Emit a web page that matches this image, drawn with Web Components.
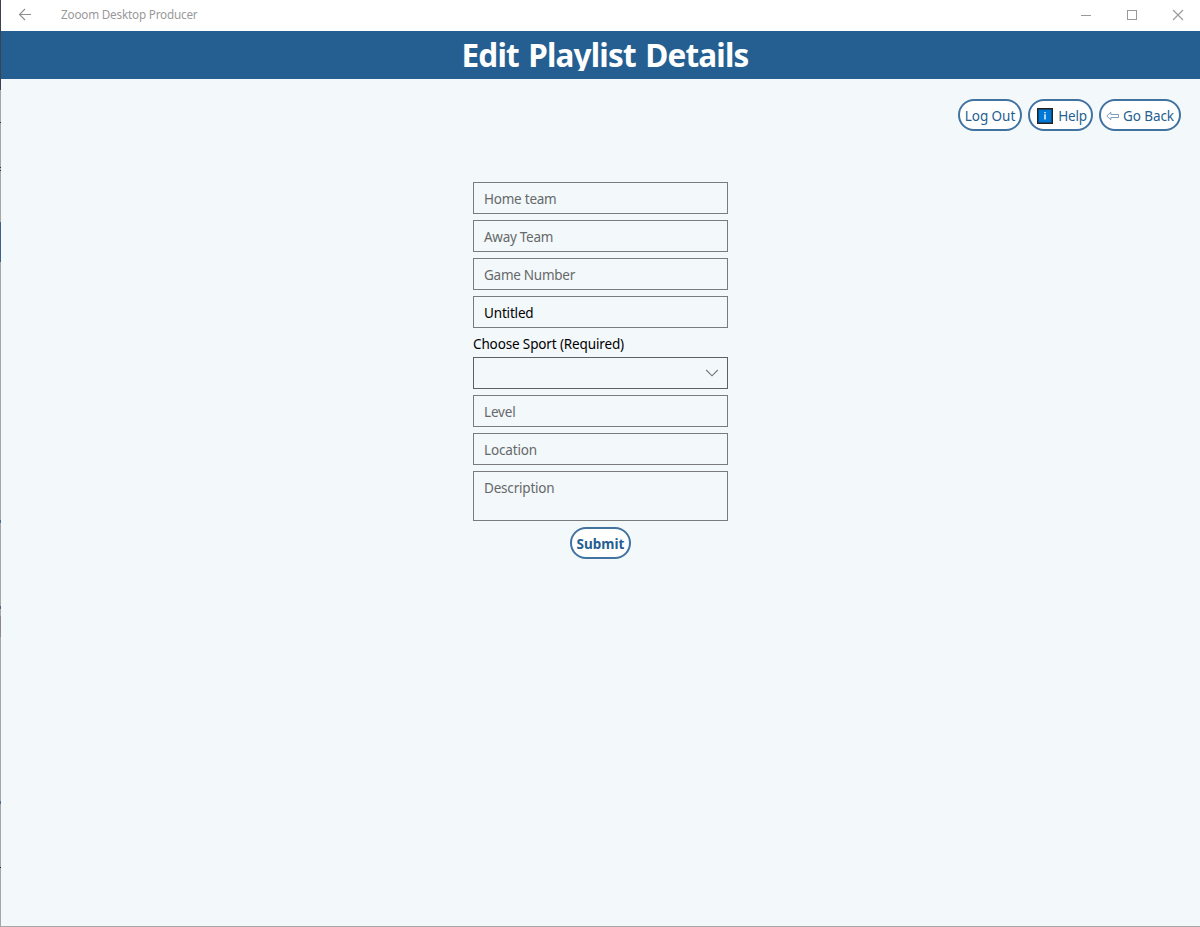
<!DOCTYPE html>
<html lang="en">
<head>
<meta charset="utf-8">
<title>Zooom Desktop Producer</title>
<style>
html,body{margin:0;height:100%;overflow:hidden}
body{font-family:"Noto Sans","Open Sans",sans-serif;font-size:13.5px;color:#000}
</style>
</head>
<body>
<app-window></app-window>
<script>
const define = (name, html, ready) => customElements.define(name, class extends HTMLElement {
  connectedCallback() {
    if (this.shadowRoot) return;
    const t = document.createElement('template');
    t.innerHTML = html;
    this.attachShadow({mode: 'open'}).append(t.content.cloneNode(true));
    if (ready) ready(this, this.shadowRoot);
  }
});

/* A single line of text tracked to a given width. */
define('fit-text', `<style>
:host{display:block;white-space:nowrap;flex:none}
span{display:inline-block}
</style><span><slot></slot></span>`, (el, root) => {
  const w = parseFloat(el.getAttribute('w'));
  el.style.width = w + 'px';
  const s = root.querySelector('span');
  const n = root.querySelector('slot').assignedNodes({flatten: true}).map(x => x.textContent).join('').length;
  if (n) s.style.letterSpacing = ((w - s.getBoundingClientRect().width) / n) + 'px';
});

define('title-bar', `<style>
:host{display:flex;height:31px;background:#fff;color:#999;font-size:11.7px;align-items:center}
svg{display:block;flex:none}
.back{margin:0 29px 0 17px}
fit-text{line-height:29px;height:31px}
.sys{margin-left:auto;display:flex}
</style>
<svg class="back" width="14" height="31" fill="none" stroke="#8d8d8d" stroke-width="1.1"><path d="M1.5 14.5H13M7 9L1.5 14.5L7 20"/></svg>
<fit-text w="136.5"><slot></slot></fit-text>
<div class="sys">
<svg width="46" height="31"><path d="M18 15.5H28" stroke="#999"/></svg>
<svg width="46" height="31"><rect x="18.5" y="10.5" width="9" height="9" fill="none" stroke="#999"/></svg>
<svg width="45" height="31"><path d="M18 10L28 20M28 10L18 20" stroke="#999" stroke-width="1.1"/></svg>
</div>`);

define('page-heading', `<style>
:host{display:flex;justify-content:center;height:48px;background:#255f91;color:#fff;font-size:31.5px;font-weight:700;word-spacing:2px}
fit-text{height:40px;line-height:47px;margin-left:9px;overflow:hidden}
</style><fit-text w="287"><slot></slot></fit-text>`);

define('pill-button', `<style>
:host{display:block}
button{display:flex;align-items:center;justify-content:center;box-sizing:border-box;height:32px;width:100%;padding:0;margin:0;
border:2px solid #4173a1;border-radius:16px;background:#fff;color:#255f91;font:inherit;line-height:28px}
::slotted(fit-text){padding-top:2px}
</style><button><slot></slot></button>`);

define('text-box', `<style>
:host{display:block;box-sizing:border-box;height:32px;border:1px solid #7a7b7d;padding:1px 10px 0;color:#666869;line-height:31px}
:host([filled]){color:#000}
:host([tall]){height:50px}
</style><slot></slot>`);

define('combo-box', `<style>
:host{display:flex;justify-content:flex-end;align-items:center;box-sizing:border-box;height:32px;border:1px solid #5d6163;padding-right:8px}
</style><svg width="14" height="8" fill="none" stroke="#737678" stroke-width="1.1"><path d="M1.2 1L7 6.8L12.8 1"/></svg>`);

define('details-form', `<style>
:host{display:flex;flex-direction:column;gap:6px;width:255px}
.sport{display:flex;flex-direction:column}
.sport fit-text{height:23px;line-height:20px}
pill-button{width:61px;align-self:center;font-weight:700}
</style>
<text-box><fit-text w="72.5">Home team</fit-text></text-box>
<text-box><fit-text w="69">Away Team</fit-text></text-box>
<text-box><fit-text w="91">Game Number</fit-text></text-box>
<text-box filled><fit-text w="49.5">Untitled</fit-text></text-box>
<div class="sport"><fit-text w="151">Choose Sport (Required)</fit-text><combo-box></combo-box></div>
<text-box><fit-text w="31.5">Level</fit-text></text-box>
<text-box><fit-text w="53">Location</fit-text></text-box>
<text-box tall><fit-text w="70.5">Description</fit-text></text-box>
<pill-button><fit-text w="48">Submit</fit-text></pill-button>`);

define('tool-row', `<style>
:host{display:flex;justify-content:flex-end;gap:6px;padding:20px 19px 0 0}
svg{flex:none}
</style>
<pill-button style="width:64px"><fit-text w="50.5">Log Out</fit-text></pill-button>
<pill-button style="width:65px"><svg width="16" height="16" style="margin:2px 5px 0 3px"><rect x=".75" y=".75" width="14.5" height="14.5" fill="#0078d7" stroke="#222" stroke-width="1.5"/><path d="M8 4V5.3M8 6.3V11.5" stroke="#fff" stroke-width="1.4"/></svg><fit-text w="28.5">Help</fit-text></pill-button>
<pill-button style="width:82px"><svg width="13" height="10" style="margin:2px 4px 0 0" fill="none" stroke="#6e94b6" stroke-width=".9"><path d="M.8 5L4.8 1.2V3.5H12.5V6.5H4.8V8.8Z"/></svg><fit-text w="51">Go Back</fit-text></pill-button>`);

define('app-window', `<style>
:host{display:grid;grid-template-columns:1px 1199px;height:927px;width:1200px}
.edge{background:linear-gradient(#3d4250 0 90px,#a6a6a6 90px 122px,#333 122px 123px,#a6a6a6 123px 167px,#333 167px 168px,#a6a6a6 168px 170px,#333 170px 171px,#a6a6a6 171px 222px,#3d6285 222px 262px,#a6a6a6 262px 520px,#4a6d94 520px 523px,#a6a6a6 523px 606px,#4a6080 606px 609px,#a6a6a6 609px 616px,#8d8789 616px 637px,#a6a6a6 637px 801px,#4a6d94 801px 804px,#a6a6a6 804px 867px,#222 867px 868px,#a6a6a6 868px)}
main{display:flex;flex-direction:column;background:#f3f8fb;border-bottom:1px solid #a7a7a7;box-sizing:border-box;height:927px}
details-form{margin:51px 0 0 472px}
</style>
<div class="edge"></div>
<main>
<title-bar>Zooom Desktop Producer</title-bar>
<page-heading>Edit Playlist Details</page-heading>
<tool-row></tool-row>
<details-form></details-form>
</main>`);
</script>
</body>
</html>
